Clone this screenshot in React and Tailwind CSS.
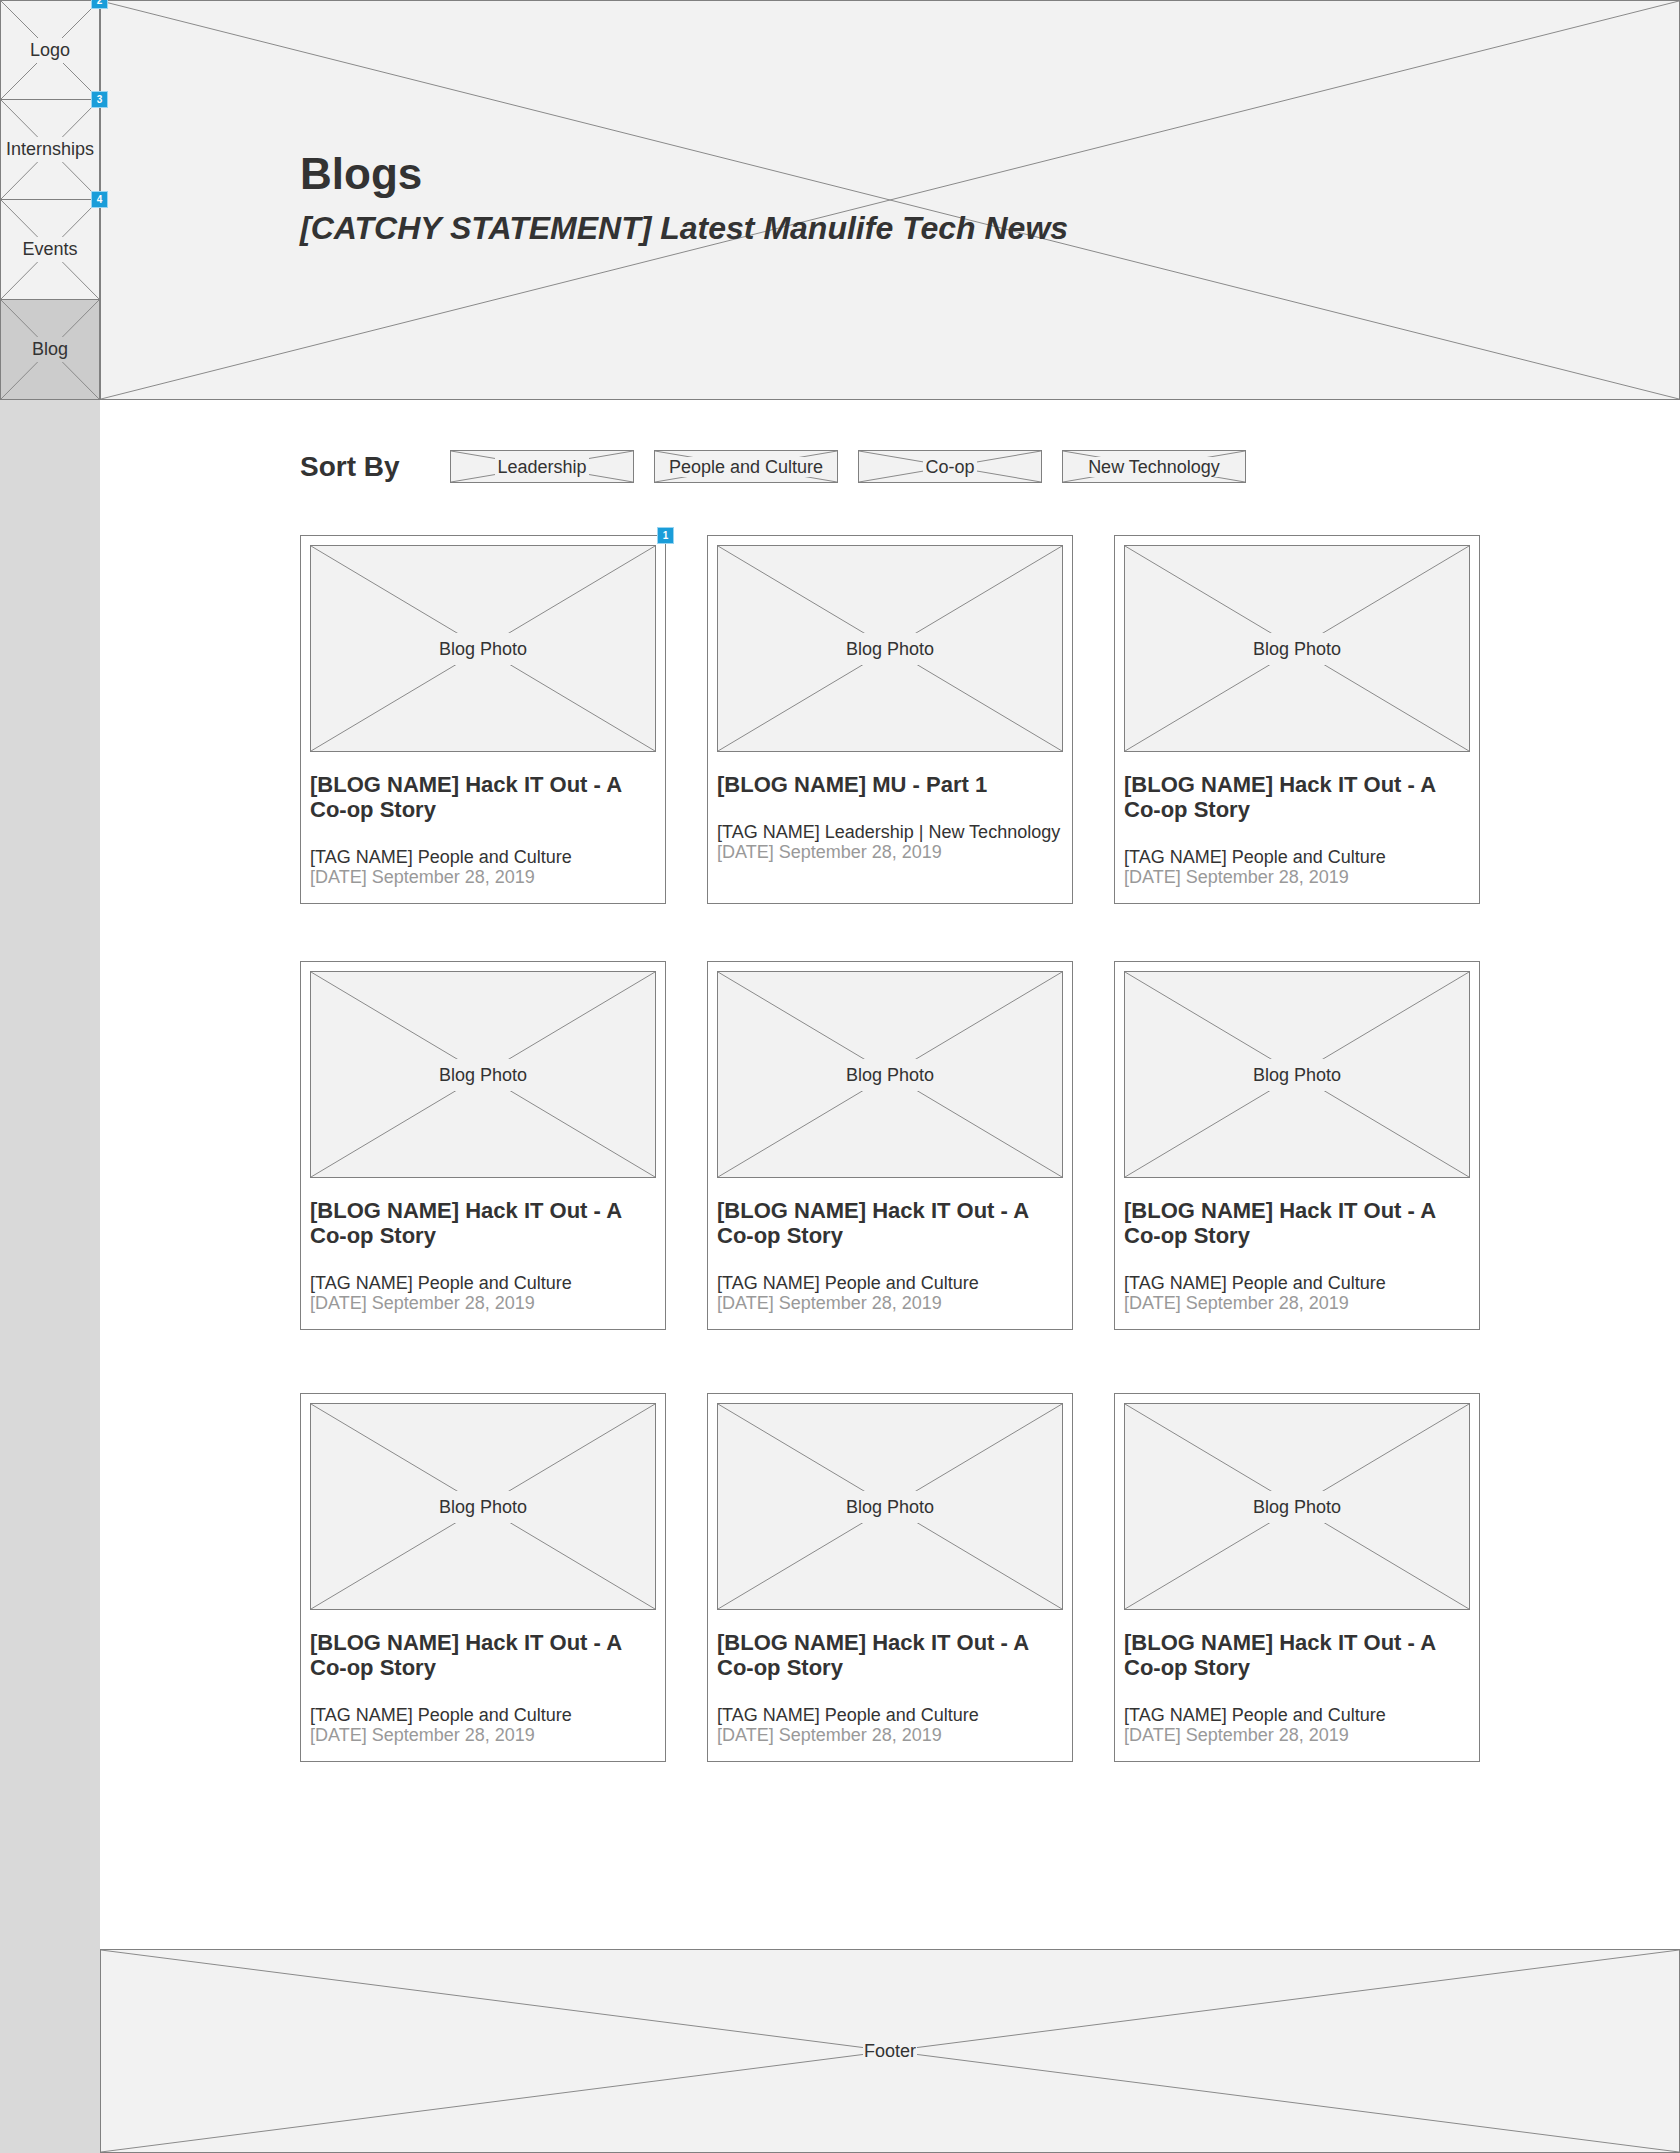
import React from "react";

const NAV = [
  { label: "Logo", badge: "2" },
  { label: "Internships", badge: "3" },
  { label: "Events", badge: "4" },
  { label: "Blog", active: true },
];

const FILTERS = ["Leadership", "People and Culture", "Co-op", "New Technology"];

const ROWS = [
  {
    gap: "mt-[52px]",
    cards: [
      { title: "[BLOG NAME] Hack IT Out - A Co-op Story", tag: "People and Culture", badge: "1" },
      { title: "[BLOG NAME] MU - Part 1", tag: "Leadership | New Technology" },
      { title: "[BLOG NAME] Hack IT Out - A Co-op Story", tag: "People and Culture" },
    ],
  },
  {
    gap: "mt-[57px]",
    cards: [
      { title: "[BLOG NAME] Hack IT Out - A Co-op Story", tag: "People and Culture" },
      { title: "[BLOG NAME] Hack IT Out - A Co-op Story", tag: "People and Culture" },
      { title: "[BLOG NAME] Hack IT Out - A Co-op Story", tag: "People and Culture" },
    ],
  },
  {
    gap: "mt-[63px]",
    cards: [
      { title: "[BLOG NAME] Hack IT Out - A Co-op Story", tag: "People and Culture" },
      { title: "[BLOG NAME] Hack IT Out - A Co-op Story", tag: "People and Culture" },
      { title: "[BLOG NAME] Hack IT Out - A Co-op Story", tag: "People and Culture" },
    ],
  },
];

// diagonal cross drawn behind placeholder content
function Cross() {
  return (
    <svg
      className="absolute inset-0 w-full h-full pointer-events-none"
      viewBox="0 0 100 100"
      preserveAspectRatio="none"
    >
      <line x1="0" y1="0" x2="100" y2="100" stroke="#8a8a8a" strokeWidth="1" vectorEffect="non-scaling-stroke" />
      <line x1="100" y1="0" x2="0" y2="100" stroke="#8a8a8a" strokeWidth="1" vectorEffect="non-scaling-stroke" />
    </svg>
  );
}

function Badge({ n, className = "" }) {
  return (
    <span
      className={`absolute z-10 w-[17px] h-[17px] grid place-items-center bg-[#1a9dd9] border border-[#9ad5f1] text-white text-[10px] font-bold leading-none ${className}`}
    >
      {n}
    </span>
  );
}

function BlogCard({ title, tag, badge }) {
  return (
    <div className="relative h-[369px] border border-[#808080] bg-white p-[9px]">
      {badge && <Badge n={badge} className="-top-[9px] -right-[9px]" />}
      <div className="relative h-[207px] border border-[#808080] bg-[#f2f2f2] grid place-items-center">
        <Cross />
        <span className="relative bg-[#f2f2f2] px-1 py-[6px] text-[18px] leading-[20px]">Blog Photo</span>
      </div>
      <h3 className="mt-[20px] text-[22px] leading-[25px] font-bold">{title}</h3>
      <p className="mt-[25px] text-[18px] leading-[20px]">[TAG NAME] {tag}</p>
      <p className="text-[18px] leading-[20px] text-[#999999]">[DATE] September 28, 2019</p>
    </div>
  );
}

export default function App() {
  return (
    <div className="flex min-h-[2153px] w-[1680px] bg-white text-[#333333] font-['Liberation_Sans',Arial,sans-serif]">
      <aside className="relative z-10 w-[100px] shrink-0 bg-[#d9d9d9]">
        {NAV.map((item, i) => (
          <div
            key={item.label}
            className={`relative h-[100px] border-x border-b border-[#808080] grid place-items-center ${
              i === 0 ? "border-t" : ""
            } ${item.active ? "bg-[#cccccc]" : "bg-[#f2f2f2]"}`}
          >
            <Cross />
            <span
              className={`relative px-0.5 py-[2px] text-[18px] leading-[21px] ${
                item.active ? "bg-[#cccccc]" : "bg-[#f2f2f2]"
              }`}
            >
              {item.label}
            </span>
            {item.badge && <Badge n={item.badge} className="-top-[9px] -right-[9px]" />}
          </div>
        ))}
      </aside>

      <main className="flex-1 flex flex-col">
        <header className="relative h-[400px] border border-[#808080] bg-[#f2f2f2]">
          <Cross />
          <div className="relative pl-[199px] pt-[148px]">
            <h1 className="text-[44px] leading-[50px] font-bold">Blogs</h1>
            <p className="mt-[10px] text-[32px] leading-[38px] font-bold italic">
              [CATCHY STATEMENT] Latest Manulife Tech News
            </p>
          </div>
        </header>

        <section className="pl-[200px]">
          <div className="mt-[50px] flex items-center">
            <h2 className="w-[150px] text-[28px] leading-[32px] font-bold">Sort By</h2>
            <div className="flex gap-[20px]">
              {FILTERS.map((f) => (
                <button
                  key={f}
                  type="button"
                  className="relative w-[184px] h-[33px] border border-[#808080] bg-[#f2f2f2] grid place-items-center"
                >
                  <Cross />
                  <span className="relative bg-[#f2f2f2] px-0.5 text-[18px] leading-[20px] text-[#333333]">{f}</span>
                </button>
              ))}
            </div>
          </div>

          {ROWS.map((row, r) => (
            <div key={r} className={`${row.gap} grid grid-cols-[366px_366px_366px] gap-x-[41px]`}>
              {row.cards.map((c, i) => (
                <BlogCard key={i} {...c} />
              ))}
            </div>
          ))}
        </section>

        <footer className="relative mt-auto h-[204px] border border-[#808080] bg-[#f2f2f2] grid place-items-center">
          <Cross />
          <span className="relative bg-[#f2f2f2] px-px text-[18px] leading-[20px]">Footer</span>
        </footer>
      </main>
    </div>
  );
}
